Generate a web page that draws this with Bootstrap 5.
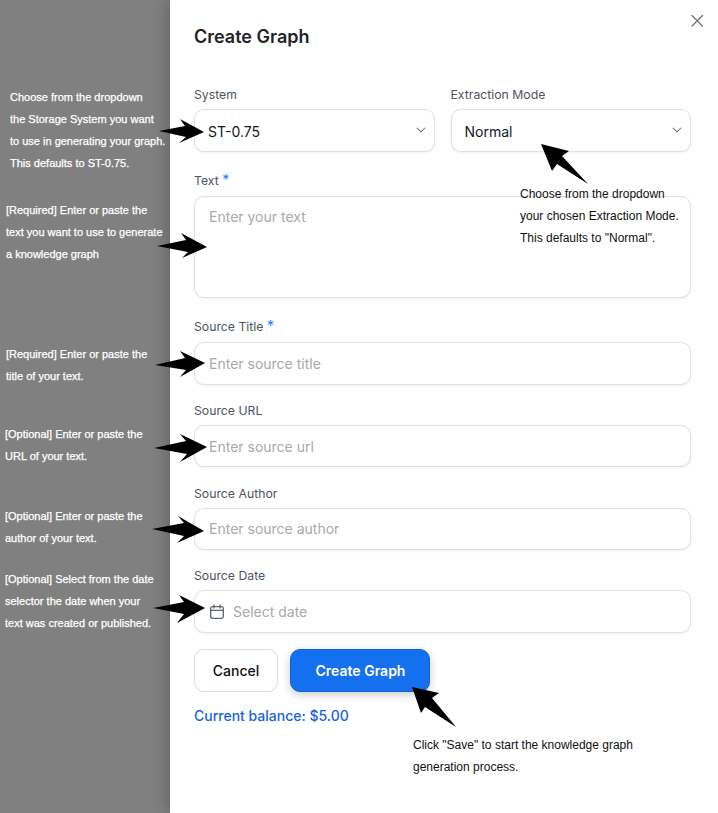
<!DOCTYPE html>
<html lang="en">
<head>
<meta charset="utf-8">
<title>Create Graph</title>
<link rel="stylesheet" href="https://cdn.jsdelivr.net/npm/bootstrap@5.3.0/dist/css/bootstrap.min.css">
<style>
html,body{height:100%;margin:0;overflow:hidden}
body{font-family:Inter,"Liberation Sans",sans-serif;background:#808080}
.stage{position:relative;width:718px;height:813px;overflow:hidden}
.backdrop{width:170px;flex:0 0 170px;background:#808080}
.sheet{flex:1 1 auto;background:#fff;padding:24px 27px 0 24px;box-shadow:0 0 18px rgba(0,0,0,.3);position:relative;font-size:14px}
.sheet-title{font-size:18px;font-weight:600;line-height:25px;color:#1f2328;margin:0 0 36px}
.close-x{position:absolute;top:13px;right:13px;width:16px;height:16px;padding:0;border:0;background:none;line-height:0}
.fld{margin-bottom:16.25px}
.fld-top{margin-bottom:19px}
.fld-area{margin-bottom:19px}
.fld-label{display:block;font-size:12.25px;line-height:20px;height:20px;color:#4b5563;margin-bottom:4px;font-weight:400}
.fld-label-wide{margin-bottom:5px}
.fld-label b{color:#1677ff;font-weight:400;font-size:14px;line-height:1}
.form-control.ctl,.form-select.ctl{height:42.5px;border:1px solid #e0e0e0;border-radius:10px;font-size:14px;line-height:20px;padding:10px 14px;box-shadow:0 1px 3px rgba(0,0,0,.06);color:#111827;background-color:#fff}
.form-select.ctl{height:43px;padding:12px 14px 10px 13px;background-image:url("data:image/svg+xml,%3csvg xmlns='http://www.w3.org/2000/svg' viewBox='0 0 16 16'%3e%3cpath fill='none' stroke='%23777' stroke-width='1.4' stroke-linecap='round' stroke-linejoin='round' d='M3 5.5l5 5 5-5'/%3e%3c/svg%3e");background-size:12px 12px;background-position:right 7px top 14px}
.ctl::placeholder{color:#a8a8ad;opacity:1}
textarea.form-control.ctl{height:102px;resize:none;padding-top:10px;min-height:0}
.date-wrap{height:42.5px;border:1px solid #e0e0e0;border-radius:10px;box-shadow:0 1px 3px rgba(0,0,0,.06);padding:0 14px;gap:8px;color:#a8a8ad;font-size:14px}
.btn-ghost{height:43px;width:84px;border:1px solid #dcdcdc;border-radius:10px;background:#fff;color:#111;font-size:14px;font-weight:500;padding:0}
.btn-make{height:43px;width:140px;border:1px solid #1a5fcc;border-radius:10px;background:#1570ef;color:#fff;font-size:14px;font-weight:600;padding:0 0 0 1px;box-shadow:0 3px 8px rgba(0,0,0,.2)}
.bal{color:#1a64d8;font-size:14px;font-weight:500;line-height:20px;margin-top:14px}
.note{position:absolute;font-family:"Liberation Sans",Arial,sans-serif;font-size:11px;line-height:22px;white-space:nowrap;margin:0}
.note-w{color:#fff;font-weight:400;-webkit-text-stroke:.25px #fff}
.note-k{color:#111;font-size:12px}
.arw{position:absolute;left:0;top:0;width:718px;height:813px;pointer-events:none}
</style>
</head>
<body>
<div class="stage d-flex">
  <div class="backdrop"></div>
  <div class="sheet">
    <button type="button" class="close-x" aria-label="Close"><svg width="16" height="16" viewBox="0 0 16 16"><path d="M3 2.5l10.5 10.5M13.5 2.5L3 13" stroke="#777" stroke-width="1.4" fill="none" stroke-linecap="round"/></svg></button>
    <h1 class="sheet-title">Create Graph</h1>
    <div class="row g-0 fld-top" style="gap:16px">
      <div class="col"><label class="fld-label">System</label><select class="form-select ctl"><option>ST-0.75</option></select></div>
      <div class="col"><label class="fld-label">Extraction Mode</label><select class="form-select ctl"><option>Normal</option></select></div>
    </div>
    <div class="fld-area"><label class="fld-label fld-label-wide">Text <b>*</b></label><textarea class="form-control ctl" placeholder="Enter your text"></textarea></div>
    <div class="fld"><label class="fld-label fld-label-wide">Source Title <b>*</b></label><input class="form-control ctl" placeholder="Enter source title"></div>
    <div class="fld"><label class="fld-label">Source URL</label><input class="form-control ctl" placeholder="Enter source url"></div>
    <div class="fld"><label class="fld-label">Source Author</label><input class="form-control ctl" placeholder="Enter source author"></div>
    <div class="fld"><label class="fld-label">Source Date</label>
      <div class="date-wrap d-flex align-items-center">
        <svg width="16" height="16" viewBox="0 0 16 16" fill="none" stroke="#5c6470" stroke-width="1.3" stroke-linecap="round"><rect x="1.7" y="2.7" width="12.6" height="11.6" rx="1.8"/><path d="M1.7 6.3h12.6M5 1v3M11 1v3"/></svg>
        <span>Select date</span>
      </div>
    </div>
    <div class="d-flex" style="gap:12px">
      <button type="button" class="btn btn-ghost">Cancel</button>
      <button type="button" class="btn btn-make">Create Graph</button>
    </div>
    <div class="bal">Current balance: $5.00</div>
  </div>

  <svg class="arw" viewBox="0 0 718 813" aria-hidden="true" fill="#000">
    <path d="M204 132L180 119L185 126L159 131L186 137L179 143Z"/>
    <path d="M207 247L181 233L186 240L157 246L188 252L182 258Z"/>
    <path d="M205 363L180 351L185 358L155 365L186 370L180 377Z"/>
    <path d="M207 447L180 434L186 441L154 448L187 454L180 462Z"/>
    <path d="M204 531L178 516L184 523L152 529L184 536L177 543Z"/>
    <path d="M205 608L179 595L184 602L153 608L184 614L177 623Z"/>
    <path d="M541 144L569 151L562 156L588 184L557 164L552 171Z"/>
    <path d="M412 687L439 693L432 698L456 727L425 707L421 713Z"/>
  </svg>

  <p class="note note-w" style="left:10px;top:86px">Choose from the dropdown<br>the Storage System you want<br>to use in generating your graph.<br>This defaults to ST-0.75.</p>
  <p class="note note-w" style="left:6px;top:199px">[Required] Enter or paste the<br>text you want to use to generate<br>a knowledge graph</p>
  <p class="note note-w" style="left:6px;top:343px">[Required] Enter or paste the<br>title of your text.</p>
  <p class="note note-w" style="left:5px;top:423px">[Optional] Enter or paste the<br>URL of your text.</p>
  <p class="note note-w" style="left:5px;top:505px">[Optional] Enter or paste the<br>author of your text.</p>
  <p class="note note-w" style="left:5px;top:568px">[Optional] Select from the date<br>selector the date when your<br>text was created or published.</p>
  <p class="note note-k" style="left:520px;top:183px">Choose from the dropdown<br>your chosen Extraction Mode.<br>This defaults to "Normal".</p>
  <p class="note note-k" style="left:413px;top:734px">Click "Save" to start the knowledge graph<br>generation process.</p>
</div>
<script src="https://cdn.jsdelivr.net/npm/bootstrap@5.3.0/dist/js/bootstrap.bundle.min.js"></script>
</body>
</html>
